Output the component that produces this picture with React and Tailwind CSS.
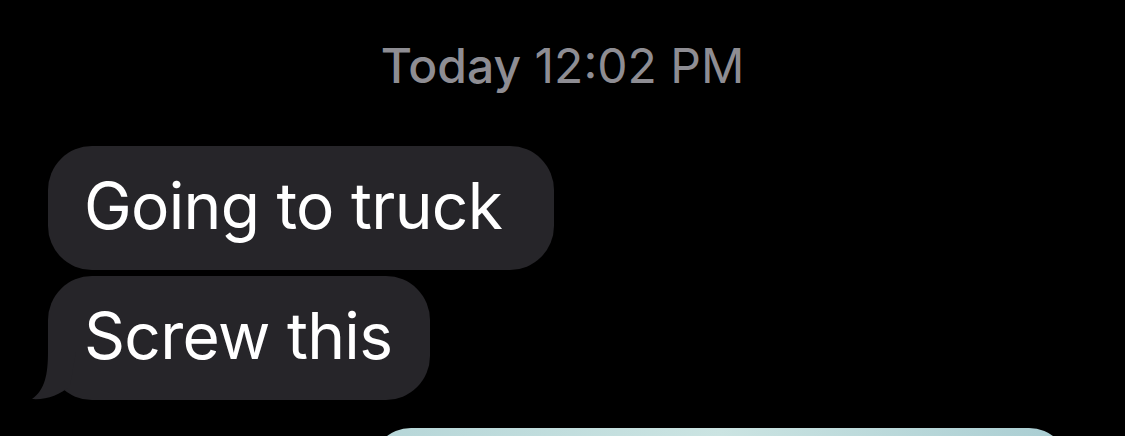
import React from 'react';

const Bubble = ({ children, tail, pr }) => (
    <div className="relative self-start">
        <div className={`bg-[#262529] rounded-[44px] h-[124px] pl-[36px] flex items-center text-white text-[64px] leading-none tracking-[-0.7px] ${pr}`}>
            <span className="-mt-[4px]">{children}</span>
        </div>
        {tail && (
            <svg className="absolute left-[-16px] bottom-0" width="44" height="48" viewBox="0 0 44 48">
                <path d="M16 0 C16 22 13 38 0 47 C14 48 28 43 38 34 L44 0 Z" fill="#262529" />
            </svg>
        )}
    </div>
);

const App = () => {
    return (
        <div className="w-[1125px] h-[436px] bg-black overflow-hidden flex flex-col" style={{ fontFamily: 'Inter, "Noto Sans", sans-serif' }}>
            <div className="pt-[37px] text-center text-[48px] leading-[58px] text-[#8e8d93]">
                <span className="font-medium">Today</span> 12:02 PM
            </div>
            <div className="mt-[51px] pl-[48px] flex flex-col gap-[6px]">
                <Bubble pr="pr-[52px]">Going to truck</Bubble>
                <Bubble tail pr="pr-[38px]">Screw this</Bubble>
            </div>
            <div className="mt-[28px] ml-[371px] w-[698px] h-[60px] rounded-t-[40px] bg-gradient-to-r from-[#b6d6d8] via-[#cbe4e2] to-[#a9cdd2] shrink-0"></div>
        </div>
    );
};

export default App;
